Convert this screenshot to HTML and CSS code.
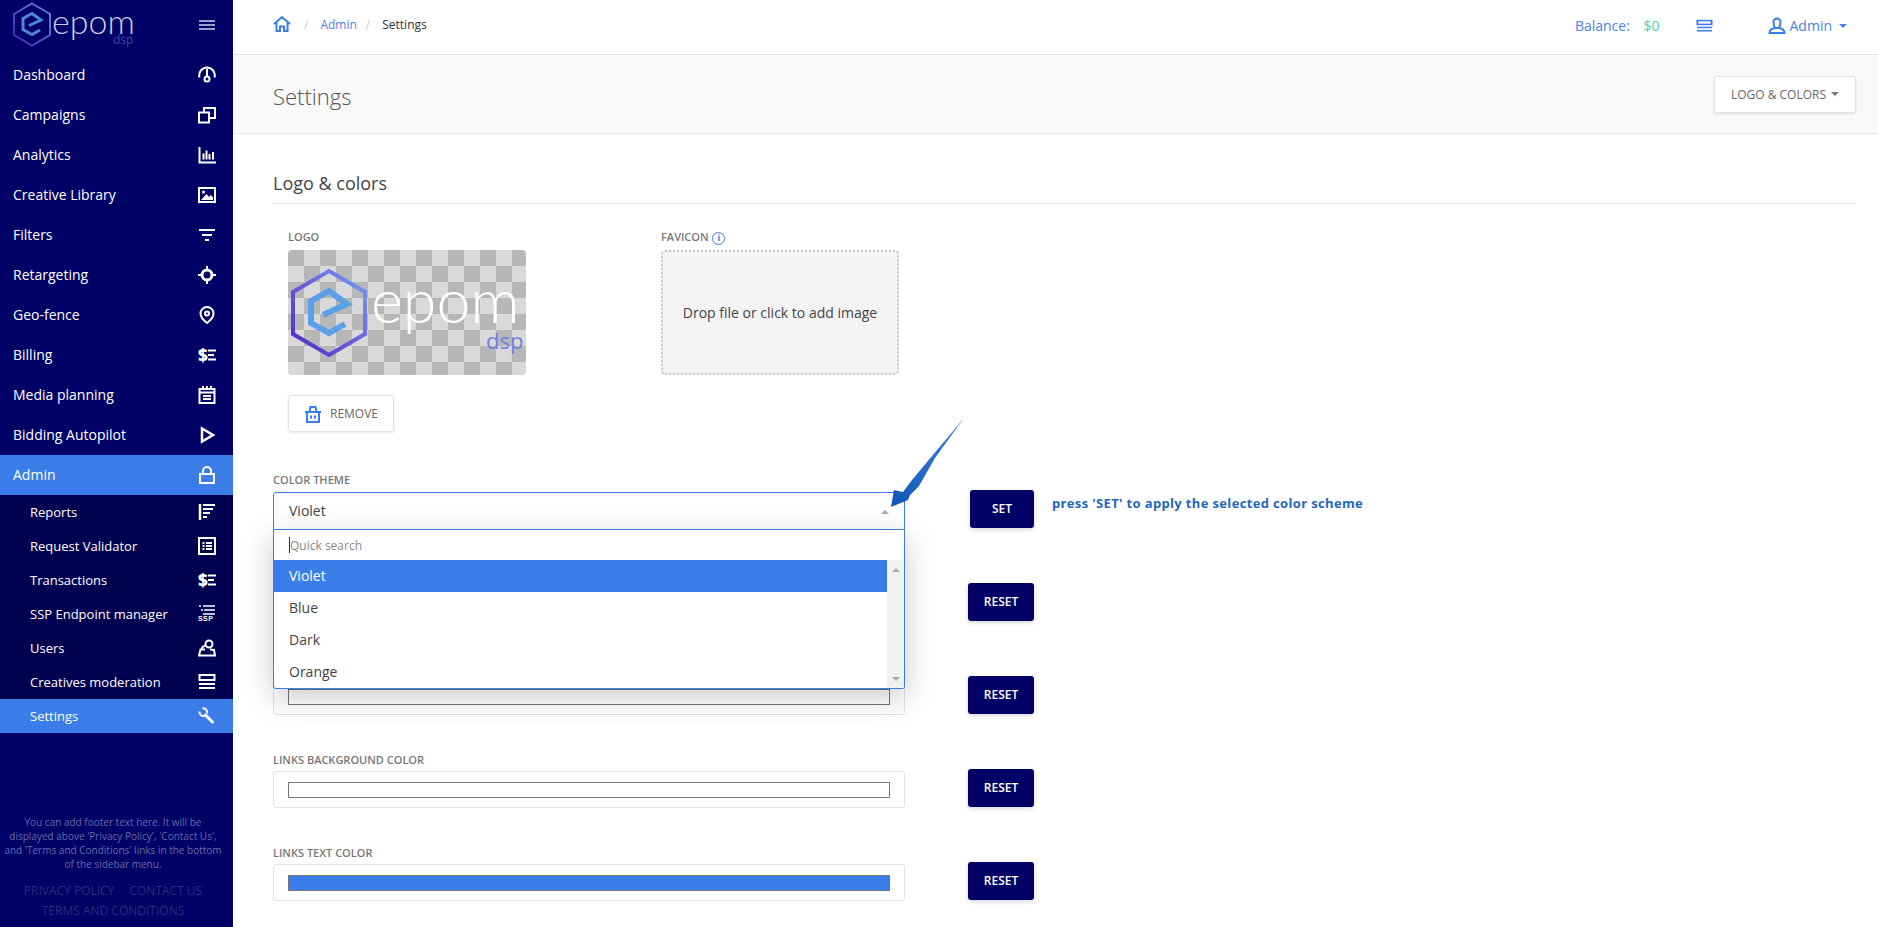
FILE: index.html
```html
<!DOCTYPE html>
<html lang="en">
<head>
    <meta charset="UTF-8">
    <meta name="viewport" content="width=device-width, initial-scale=1.0">
    <title>Settings</title>
    <link rel="stylesheet" href="styles.css">
</head>
<body>
    <!-- icon sprite -->
    <svg class="sprite" aria-hidden="true">
        <defs>
            <linearGradient id="hex-grad" x1="1" y1="0" x2="0" y2="1">
                <stop offset="0" stop-color="#7a9cf8"/>
                <stop offset="1" stop-color="#5326c0"/>
            </linearGradient>
        </defs>
        <symbol id="i-mark" viewBox="0 0 80 90">
            <polygon points="40,3 76,24 76,66 40,87 4,66 4,24" fill="none" stroke="url(#hex-grad)" stroke-width="4"/>
            <polyline points="34,47 58,36 40,23 22,33 22,55 40,65 56,56" fill="none" stroke="#5ba0e6" stroke-width="6"/>
        </symbol>
        <symbol id="i-dash" viewBox="0 0 18 18"><path d="M1.500 11.500A7.800 7.800 0 1 1 16.500 11.500M9 3v7"/><circle cx="9" cy="13" r="2.500"/></symbol>
        <symbol id="i-camp" viewBox="0 0 18 18"><rect x="1" y="6.500" width="10" height="10"/><path d="M6 6.500V2h11v10h-5.500"/></symbol>
        <symbol id="i-analytics" viewBox="0 0 18 18"><path d="M1.500 1v15.500H18"/><path d="M5.500 7.500v6M8.500 4.500v9M11.500 8v5.500M15 6v7.500"/></symbol>
        <symbol id="i-image" viewBox="0 0 18 18"><rect x="1" y="2" width="16" height="14"/><polygon class="solid" points="3,14 8.500,8 11,11 13,9 15,11.500 15,14"/><circle class="solid" cx="5.500" cy="6" r="1.500"/></symbol>
        <symbol id="i-filter" viewBox="0 0 18 18"><path d="M1 4h16M4 9h10M7 14h4"/></symbol>
        <symbol id="i-target" viewBox="0 0 18 18"><circle cx="9" cy="9" r="5" stroke-width="3"/><path d="M9 0v4M9 14v4M0 9h4M14 9h4"/></symbol>
        <symbol id="i-pin" viewBox="0 0 18 18"><path d="M9 1a6.500 6.500 0 0 1 6.500 6.500C15.500 12 9 17 9 17S2.500 12 2.500 7.500A6.500 6.500 0 0 1 9 1z"/><circle cx="9" cy="7.500" r="2"/></symbol>
        <symbol id="i-cal" viewBox="0 0 18 18"><rect x="1.500" y="3" width="15" height="14"/><path d="M1 6.500h16M5 0v4M9 0v4M13 0v4M5 10h8M5 13h8"/></symbol>
        <symbol id="i-play" viewBox="0 0 18 18"><path d="M4 2.500 15 9 4 15.500z" stroke-width="2.500"/></symbol>
        <symbol id="i-lock" viewBox="0 0 18 18"><rect x="2" y="8" width="14" height="9"/><path d="M5 8V5a4 4 0 0 1 8 0v3"/></symbol>
        <symbol id="i-reports" viewBox="0 0 18 18"><path d="M2 1v16" stroke-width="2.500"/><path d="M5 2h12M5 6h10M5 10h7M5 14h4"/></symbol>
        <symbol id="i-table" viewBox="0 0 18 18"><rect x="1" y="1" width="16" height="16"/><path d="M4.500 6h2M8 6h6M4.500 9h2M8 9h6M4.500 12h2M8 12h6"/></symbol>
        <symbol id="i-users" viewBox="0 0 18 18"><circle cx="11" cy="5" r="3.500"/><path d="M7 10.500H2.500L1 16.500h16l-1-5.500-4-.5"/><path d="M4 11a3 3 0 0 1 3-4"/></symbol>
        <symbol id="i-list" viewBox="0 0 18 18" preserveAspectRatio="none"><rect x="1.500" y="2" width="15" height="5"/><path d="M1 11h16M1 15h16"/></symbol>
        <symbol id="i-wrench" viewBox="0 0 18 18"><path d="M1.500 4.500a4 4 0 0 0 5.500 4.200"/><path d="M4.500 1.200a4 4 0 0 1 4.300 5.300"/><path d="M7.500 8l7 7" stroke-width="3" stroke-linecap="round"/></symbol>
        <symbol id="i-home" viewBox="0 0 18 18"><path d="M1 9 9 2l8 7M3.500 7.500V16h3.500v-4.500h4V16h3.500V7.500"/></symbol>
        <symbol id="i-user" viewBox="0 0 18 18"><path d="M5.500 5a3.500 3.500 0 0 1 7 0c0 2-.5 4-1.500 6h-4c-1-2-1.500-4-1.500-6z"/><path d="M7 11c-3 .5-5.500 2-5.500 5h15c0-3-2.500-4.500-5.500-5"/></symbol>
        <symbol id="i-trash" viewBox="0 0 18 18"><path d="M1 7h16M3 7v10h12V7M5.500 7l1-5h5l1 5M7 10.500v3M11 10.500v3"/></symbol>
        <symbol id="i-lines" viewBox="0 0 8 18"><path d="M0 4.500h8M0 9h6M0 13.500h8"/></symbol>
        <symbol id="i-ssp-lines" viewBox="0 0 18 10"><path d="M1 1h2M5 1h12M3 5h2M6 5h11M5 9h12" stroke-width="1.500"/></symbol>
    </svg>

    <div class="layout">
        <aside class="sidebar">
            <div class="brand">
                <svg class="brand-mark"><use href="#i-mark"/></svg>
                <span class="brand-name">epom</span>
                <span class="brand-sub">dsp</span>
                <span class="burger"></span>
            </div>

            <nav class="menu">
                <a class="menu-item">Dashboard <svg class="icon"><use href="#i-dash"/></svg></a>
                <a class="menu-item">Campaigns <svg class="icon"><use href="#i-camp"/></svg></a>
                <a class="menu-item">Analytics <svg class="icon"><use href="#i-analytics"/></svg></a>
                <a class="menu-item">Creative Library <svg class="icon"><use href="#i-image"/></svg></a>
                <a class="menu-item">Filters <svg class="icon"><use href="#i-filter"/></svg></a>
                <a class="menu-item">Retargeting <svg class="icon"><use href="#i-target"/></svg></a>
                <a class="menu-item">Geo-fence <svg class="icon"><use href="#i-pin"/></svg></a>
                <a class="menu-item">Billing <span class="icon-money"><b>$</b><svg class="icon money-lines"><use href="#i-lines"/></svg></span></a>
                <a class="menu-item">Media planning <svg class="icon"><use href="#i-cal"/></svg></a>
                <a class="menu-item">Bidding Autopilot <svg class="icon"><use href="#i-play"/></svg></a>
                <a class="menu-item active">Admin <svg class="icon"><use href="#i-lock"/></svg></a>
                <div class="submenu">
                    <a class="sub-item">Reports <svg class="icon"><use href="#i-reports"/></svg></a>
                    <a class="sub-item">Request Validator <svg class="icon"><use href="#i-table"/></svg></a>
                    <a class="sub-item">Transactions <span class="icon-money"><b>$</b><svg class="icon money-lines"><use href="#i-lines"/></svg></span></a>
                    <a class="sub-item">SSP Endpoint manager <span class="icon-ssp"><svg class="icon ssp-lines"><use href="#i-ssp-lines"/></svg><b>SSP</b></span></a>
                    <a class="sub-item">Users <svg class="icon"><use href="#i-users"/></svg></a>
                    <a class="sub-item">Creatives moderation <svg class="icon"><use href="#i-list"/></svg></a>
                    <a class="sub-item active">Settings <svg class="icon"><use href="#i-wrench"/></svg></a>
                </div>
            </nav>

            <div class="side-footer">
                <p class="side-note">You can add footer text here. It will be displayed above 'Privacy Policy', 'Contact Us', and 'Terms and Conditions' links in the bottom of the sidebar menu.</p>
                <div class="side-links">
                    <a>PRIVACY POLICY</a>
                    <a>CONTACT US</a>
                    <a>TERMS AND CONDITIONS</a>
                </div>
            </div>
        </aside>

        <div class="main">
            <header class="topbar">
                <div class="crumbs">
                    <svg class="icon crumb-home"><use href="#i-home"/></svg>
                    <span class="crumb-sep">/</span>
                    <a class="crumb-link">Admin</a>
                    <span class="crumb-sep">/</span>
                    <span class="crumb-current">Settings</span>
                </div>
                <div class="balance">Balance: <span class="balance-sum">$0</span></div>
                <svg class="icon top-list"><use href="#i-list"/></svg>
                <div class="top-user">
                    <svg class="icon"><use href="#i-user"/></svg>
                    <span>Admin</span>
                    <span class="caret"></span>
                </div>
            </header>

            <div class="page-head">
                <h1>Settings</h1>
                <button class="btn-light">LOGO &amp; COLORS <span class="caret"></span></button>
            </div>

            <section class="content">
                <h2>Logo &amp; colors</h2>

                <div class="uploads">
                    <div class="upload-col">
                        <label class="field-label">LOGO</label>
                        <div class="logo-preview">
                            <svg class="preview-mark"><use href="#i-mark"/></svg>
                            <span class="preview-name">epom</span>
                            <span class="preview-sub">dsp</span>
                        </div>
                        <button class="btn-light btn-remove"><svg class="icon"><use href="#i-trash"/></svg> REMOVE</button>
                    </div>
                    <div class="upload-col">
                        <label class="field-label">FAVICON <span class="info">i</span></label>
                        <div class="dropzone">Drop file or click to add image</div>
                    </div>
                </div>

                <div class="form-rows">
                    <div class="form-row theme-row">
                        <div class="field">
                            <label class="field-label">COLOR THEME</label>
                            <div class="select-wrap">
                                <div class="select-box">Violet <span class="caret-up"></span></div>
                                <div class="select-drop">
                                    <div class="quick-search"><span class="cursor"></span>Quick search</div>
                                    <div class="drop-body">
                                        <ul class="options">
                                            <li class="selected">Violet</li>
                                            <li>Blue</li>
                                            <li>Dark</li>
                                            <li>Orange</li>
                                        </ul>
                                        <div class="scroll-track">
                                            <span class="scroll-up"></span>
                                            <span class="scroll-down"></span>
                                        </div>
                                    </div>
                                </div>
                            </div>
                        </div>
                        <button class="btn-dark btn-set">SET</button>
                        <p class="set-hint">press 'SET' to apply the selected color scheme</p>
                    </div>

                    <div class="form-row">
                        <div class="field">
                            <div class="color-box"><div class="swatch"></div></div>
                        </div>
                        <button class="btn-dark">RESET</button>
                    </div>
                    <div class="form-row">
                        <div class="field">
                            <div class="color-box"><div class="swatch"></div></div>
                        </div>
                        <button class="btn-dark">RESET</button>
                    </div>
                    <div class="form-row">
                        <div class="field">
                            <label class="field-label">LINKS BACKGROUND COLOR</label>
                            <div class="color-box"><div class="swatch"></div></div>
                        </div>
                        <button class="btn-dark">RESET</button>
                    </div>
                    <div class="form-row">
                        <div class="field">
                            <label class="field-label">LINKS TEXT COLOR</label>
                            <div class="color-box"><div class="swatch swatch-blue"></div></div>
                        </div>
                        <button class="btn-dark">RESET</button>
                    </div>
                </div>
            </section>

            <!-- annotation arrow over the select -->
            <svg class="note-arrow" viewBox="0 0 80 95">
                <defs>
                    <linearGradient id="arrow-grad" x1="1" y1="0" x2="0" y2="1">
                        <stop offset="0" stop-color="#3f86dc"/>
                        <stop offset="1" stop-color="#0f55b5"/>
                    </linearGradient>
                </defs>
                <polygon points="76,2 47,42 31,70 22,79 20,84 3,91 6,74 15,76 24,64 44,40" fill="url(#arrow-grad)"/>
            </svg>
        </div>
    </div>
</body>
</html>
```

FILE: styles.css
```css
* {
    box-sizing: border-box;
}
html, body {
    height: 100%;
    margin: 0;
}
body {
    font-family: 'Open Sans', 'Noto Sans', sans-serif;
    font-size: 14px;
    color: #333;
    background: white;
    overflow: hidden;
}
.sprite {
    position: absolute;
    width: 0;
    height: 0;
    overflow: hidden;
}
.layout {
    display: flex;
    height: 927px;
}

/* icons */
.icon {
    width: 18px;
    height: 18px;
    flex: none;
    fill: none;
    stroke: currentColor;
    stroke-width: 2;
}
.solid {
    fill: currentColor;
    stroke: none;
}
.icon-money {
    display: flex;
    align-items: center;
    justify-content: space-between;
    width: 18px;
    height: 18px;
    flex: none;
    font-size: 17px;
    font-weight: 700;
    line-height: 18px;
}
.money-lines {
    width: 8px;
}
.icon-ssp {
    display: flex;
    flex-direction: column;
    width: 18px;
    height: 18px;
    flex: none;
    font-family: 'Liberation Sans', sans-serif;
    font-size: 7px;
    font-weight: 700;
    line-height: 8px;
    letter-spacing: 0.4px;
}
.ssp-lines {
    height: 10px;
}

/* sidebar */
.sidebar {
    width: 233px;
    flex: none;
    display: flex;
    flex-direction: column;
    background: #000066;
    color: white;
}
.brand {
    position: relative;
    height: 55px;
    flex: none;
}
.brand-mark {
    position: absolute;
    left: 12px;
    top: 2px;
    width: 40px;
    height: 45px;
    opacity: 0.85;
}
.brand-name {
    position: absolute;
    left: 52px;
    top: 1px;
    font-family: 'Lato', sans-serif;
    font-weight: 300;
    font-size: 34px;
    line-height: 40px;
    color: #c9cbe6;
}
.brand-sub {
    position: absolute;
    left: 113px;
    top: 32px;
    font-size: 12px;
    line-height: 16px;
    color: #44469f;
}
.burger {
    position: absolute;
    left: 199px;
    top: 20px;
    width: 16px;
    height: 10px;
    border-top: 2px solid #9c9ec8;
    border-bottom: 2px solid #9c9ec8;
}
.burger::after {
    content: "";
    display: block;
    margin-top: 2px;
    height: 2px;
    background: #9c9ec8;
}
.menu-item {
    display: flex;
    align-items: center;
    justify-content: space-between;
    height: 40px;
    padding: 0 17px 2px 13px;
    font-size: 14px;
}
.menu-item .icon,
.menu-item .icon-money {
    margin-top: 2px;
}
.menu-item .money-lines {
    margin-top: 0;
}
.menu-item.active,
.sub-item.active {
    background: #3b7de8;
}
.submenu {
    background: #000050;
}
.sub-item {
    display: flex;
    align-items: center;
    justify-content: space-between;
    height: 34px;
    padding: 0 17px 0 30px;
    font-size: 13px;
}
.side-footer {
    margin-top: auto;
    padding: 0 10px 6px 3px;
    text-align: center;
}
.side-note {
    margin: 0 0 10px;
    font-size: 10px;
    line-height: 14px;
    color: #6a6aaa;
}
.side-links {
    font-size: 12px;
    line-height: 20px;
    color: #2c2c7c;
}
.side-links a {
    margin: 0 6px;
}

/* top bar */
.main {
    position: relative;
    flex: 1;
    min-width: 0;
}
.topbar {
    display: flex;
    align-items: center;
    height: 55px;
    padding: 0 31px 3px 40px;
    border-bottom: 1px solid #e3e3e3;
}
.crumbs {
    display: flex;
    align-items: center;
    flex: 1;
    margin-bottom: 2px;
    font-size: 12px;
}
.crumb-home {
    margin-bottom: 2px;
    color: #3b7de8;
}
.crumb-sep {
    margin: 0 12px 0 13px;
    color: #ccc;
}
.crumb-link {
    color: #4f7fe8;
}
.crumb-link + .crumb-sep {
    margin-left: 9px;
}
.crumb-current {
    color: #333;
}
.balance {
    font-size: 14px;
    color: #4f7fe8;
}
.balance-sum {
    margin-left: 10px;
    color: #4fd3a5;
}
.top-list {
    width: 17px;
    height: 14px;
    margin: 0 55px 0 36px;
    color: #3b7de8;
}
.top-user {
    display: flex;
    align-items: center;
    gap: 4px;
    color: #4f7fe8;
    font-size: 14px;
}
.top-user .icon {
    color: #3b7de8;
}
.caret {
    display: inline-block;
    width: 0;
    height: 0;
    margin-left: 3px;
    border-left: 4px solid transparent;
    border-right: 4px solid transparent;
    border-top: 4px solid currentColor;
    vertical-align: middle;
}

/* page head */
.page-head {
    display: flex;
    align-items: center;
    justify-content: space-between;
    height: 79px;
    padding: 0 22px 0 40px;
    background: #f9f9f9;
    border-bottom: 1px solid #e9e9e9;
}
h1 {
    margin: 4px 0 0;
    font-size: 22px;
    font-weight: 300;
    color: #555;
}
.btn-light {
    display: inline-flex;
    align-items: center;
    height: 37px;
    padding: 0 16px;
    font-family: inherit;
    font-size: 12px;
    color: #666;
    background: white;
    border: 1px solid #e2e2e2;
    border-radius: 3px;
    box-shadow: 0 1px 3px rgba(0,0,0,0.1);
}
.btn-light .caret {
    margin-left: 5px;
    color: #777;
}

/* content */
.content {
    padding: 36px 22px 0 40px;
}
h2 {
    margin: 0 0 26px;
    padding-bottom: 7px;
    font-size: 18px;
    font-weight: 400;
    line-height: 26px;
    color: #444;
    border-bottom: 1px solid #e3e3e3;
}
.uploads {
    display: flex;
    padding-left: 15px;
    margin-bottom: 41px;
}
.upload-col {
    width: 373px;
}
.field-label {
    display: block;
    height: 14px;
    margin-bottom: 6px;
    font-size: 11px;
    font-weight: 600;
    line-height: 14px;
    color: #777;
}
.info {
    display: inline-block;
    width: 13px;
    height: 13px;
    margin-left: 1px;
    font-size: 9px;
    font-weight: 700;
    line-height: 10px;
    text-align: center;
    color: #3b7de8;
    border: 1.500px solid #3b7de8;
    border-radius: 50%;
}
.logo-preview {
    position: relative;
    width: 238px;
    height: 125px;
    margin-bottom: 20px;
    overflow: hidden;
    border-radius: 4px;
    background: repeating-conic-gradient(#d9d9d9 0 25%, #b7b7b7 0 50%) 0 0 / 32px 32px;
}
.preview-mark {
    position: absolute;
    left: 1px;
    top: 18px;
    width: 80px;
    height: 90px;
}
.preview-name {
    position: absolute;
    left: 83px;
    top: 5px;
    font-family: 'Lato', sans-serif;
    font-weight: 300;
    font-size: 61px;
    line-height: 90px;
    color: white;
}
.preview-sub {
    position: absolute;
    left: 198px;
    top: 75px;
    font-size: 22px;
    line-height: 30px;
    color: #6f80e0;
}
.btn-remove {
    width: 106px;
    padding: 0 15px;
    font-size: 12px;
}
.btn-remove .icon {
    margin-right: 8px;
    color: #3b7de8;
}
.dropzone {
    display: flex;
    align-items: center;
    justify-content: center;
    width: 238px;
    height: 125px;
    font-size: 14px;
    color: #444;
    background: #f4f4f4;
    border: 2px dotted #c8c8c8;
    border-radius: 4px;
}

/* form rows */
.form-rows {
    display: flex;
    flex-direction: column;
    gap: 37px;
}
.form-row {
    display: grid;
    grid-template-columns: 632px 130px auto;
    align-items: end;
}
.form-row .field-label {
    margin-bottom: 5px;
}
.form-row .field-label:has(+ .color-box) {
    margin-bottom: 4px;
}
.field {
    min-height: 56px;
    display: flex;
    flex-direction: column;
    justify-content: flex-end;
}
.btn-dark {
    justify-self: end;
    width: 66px;
    height: 38px;
    margin: 0 1px 2px 0;
    padding: 0 0 2px;
    font-family: inherit;
    font-size: 12px;
    font-weight: 600;
    color: white;
    background: #000066;
    border: 0;
    border-radius: 3px;
    box-shadow: 0 2px 4px rgba(0,0,0,0.15);
}
.btn-set {
    width: 64px;
}
.set-hint {
    align-self: start;
    margin: 21px 0 0 17px;
    font-size: 13px;
    font-weight: 700;
    line-height: 18px;
    letter-spacing: 0.35px;
    color: #2566c0;
}
.select-wrap {
    position: relative;
}
.select-box {
    position: relative;
    height: 38px;
    padding: 0 15px;
    font-size: 14px;
    line-height: 36px;
    color: #444;
    border: 1px solid #3b7de8;
    border-radius: 3px 3px 0 0;
}
.caret-up {
    position: absolute;
    right: 15px;
    top: 17px;
    border-left: 4px solid transparent;
    border-right: 4px solid transparent;
    border-bottom: 4px solid #aaa;
}
.select-drop {
    position: absolute;
    left: 0;
    right: 0;
    top: 38px;
    z-index: 5;
    background: white;
    border: 1px solid #3b7de8;
    border-top: 0;
    border-radius: 0 0 3px 3px;
    box-shadow: 0 8px 30px rgba(0,0,0,0.22);
}
.quick-search {
    display: flex;
    align-items: center;
    height: 30px;
    padding-left: 15px;
    font-size: 12px;
    color: #888;
}
.cursor {
    width: 1px;
    height: 16px;
    background: #333;
}
.drop-body {
    display: flex;
}
.options {
    flex: 1;
    margin: 0;
    padding: 0;
    list-style: none;
}
.options li {
    height: 32px;
    padding-left: 15px;
    font-size: 14px;
    line-height: 32px;
    color: #444;
}
.options li.selected {
    color: white;
    background: #3b7de8;
}
.scroll-track {
    position: relative;
    width: 17px;
    background: #f1f1f1;
}
.scroll-up,
.scroll-down {
    position: absolute;
    left: 5px;
    border-left: 4px solid transparent;
    border-right: 4px solid transparent;
}
.scroll-up {
    top: 8px;
    border-bottom: 4px solid #aaa;
}
.scroll-down {
    bottom: 7px;
    border-top: 4px solid #aaa;
}
.color-box {
    height: 37px;
    margin-bottom: 1px;
    padding: 10px 14px;
    border: 1px solid #e2e2e2;
    border-radius: 3px;
}
.swatch {
    height: 16px;
    border: 1px solid #777;
    background: white;
}
.swatch-blue {
    background: #3b7de8;
}

/* arrow pointing at the select */
.note-arrow {
    position: absolute;
    left: 655px;
    top: 416px;
    z-index: 6;
    width: 80px;
    height: 95px;
}
```
